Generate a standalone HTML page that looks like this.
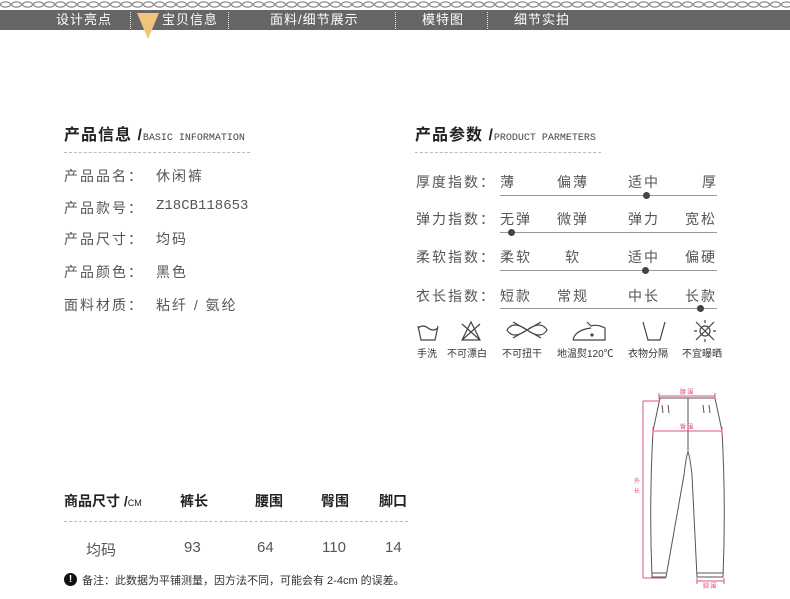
<!DOCTYPE html>
<html><head><meta charset="utf-8"><style>
*{margin:0;padding:0;box-sizing:border-box}
body{width:790px;height:599px;background:#fff;position:relative;overflow:hidden;font-family:"Liberation Sans","Noto Sans CJK SC",sans-serif;color:#555}
.a{position:absolute;white-space:nowrap}
.nav{position:absolute;left:0;top:10px;width:790px;height:20px;background:#666}
.nt{position:absolute;top:11px;color:#fff;font-size:13px;line-height:18px;letter-spacing:1px}
.sep{position:absolute;top:12px;height:17px;border-left:1px dotted #eee}
.t{font-size:16px;color:#222;letter-spacing:1px;font-weight:bold}
.t span{font-family:"Liberation Mono",monospace;font-size:10px;color:#444;letter-spacing:0;font-weight:normal}
.dl{position:absolute;height:1px;border-top:1px dashed #bbb}
.r{font-size:14px;letter-spacing:2px;color:#555}
.ln{position:absolute;height:1px;background:#999;left:500px;width:217px}
.dot{position:absolute;width:7px;height:7px;border-radius:50%;background:#444}
.ic{font-size:10px;color:#333;top:345px}
.h{font-size:14px;color:#222;font-weight:bold}
</style></head><body>
<svg class="a" style="left:0;top:0" width="790" height="9"><defs><pattern id="p" width="11" height="9" patternUnits="userSpaceOnUse"><ellipse cx="5.5" cy="4.5" rx="5" ry="2.6" fill="none" stroke="#888" stroke-width="1.2"/></pattern></defs><rect width="790" height="9" fill="url(#p)"/></svg>
<div class="nav"></div>
<div class="nt" style="left:56px">设计亮点</div>
<div class="nt" style="left:162px">宝贝信息</div>
<div class="nt" style="left:270px">面料/细节展示</div>
<div class="nt" style="left:422px">模特图</div>
<div class="nt" style="left:514px">细节实拍</div>
<div class="sep" style="left:130px"></div><div class="sep" style="left:228px"></div><div class="sep" style="left:395px"></div><div class="sep" style="left:487px"></div>
<svg class="a" style="left:136px;top:12px" width="24" height="28"><polygon points="1,1 23,1 12,27" fill="#f2c37a"/></svg>

<div class="a t" style="left:64px;top:121px">产品信息 /<span>BASIC INFORMATION</span></div>
<div class="dl" style="left:64px;top:152px;width:186px"></div>
<div class="a r" style="left:64px;top:166px">产品品名：</div><div class="a r" style="left:156px;top:166px">休闲裤</div>
<div class="a r" style="left:64px;top:198px">产品款号：</div><div class="a r" style="left:156px;top:198px;font-family:'Liberation Mono',monospace;letter-spacing:0">Z18CB118653</div>
<div class="a r" style="left:64px;top:229px">产品尺寸：</div><div class="a r" style="left:156px;top:229px">均码</div>
<div class="a r" style="left:64px;top:262px">产品颜色：</div><div class="a r" style="left:156px;top:262px">黑色</div>
<div class="a r" style="left:64px;top:295px">面料材质：</div><div class="a r" style="left:156px;top:295px">粘纤 / 氨纶</div>

<div class="a t" style="left:415px;top:121px">产品参数 /<span>PRODUCT PARMETERS</span></div>
<div class="dl" style="left:415px;top:152px;width:186px"></div>

<div class="a r" style="left:416px;top:172px">厚度指数：</div>
<div class="a r" style="left:500px;top:172px">薄</div><div class="a r" style="left:557px;top:172px">偏薄</div><div class="a r" style="left:628px;top:172px">适中</div><div class="a r" style="left:702px;top:172px">厚</div>
<div class="ln" style="top:195px"></div><div class="dot" style="left:643px;top:192px"></div>

<div class="a r" style="left:416px;top:209px">弹力指数：</div>
<div class="a r" style="left:500px;top:209px">无弹</div><div class="a r" style="left:557px;top:209px">微弹</div><div class="a r" style="left:628px;top:209px">弹力</div><div class="a r" style="left:685px;top:209px">宽松</div>
<div class="ln" style="top:232px"></div><div class="dot" style="left:508px;top:229px"></div>

<div class="a r" style="left:416px;top:247px">柔软指数：</div>
<div class="a r" style="left:500px;top:247px">柔软</div><div class="a r" style="left:565px;top:247px">软</div><div class="a r" style="left:628px;top:247px">适中</div><div class="a r" style="left:685px;top:247px">偏硬</div>
<div class="ln" style="top:270px"></div><div class="dot" style="left:642px;top:267px"></div>

<div class="a r" style="left:416px;top:286px">衣长指数：</div>
<div class="a r" style="left:500px;top:286px">短款</div><div class="a r" style="left:557px;top:286px">常规</div><div class="a r" style="left:628px;top:286px">中长</div><div class="a r" style="left:685px;top:286px">长款</div>
<div class="ln" style="top:308px"></div><div class="dot" style="left:697px;top:305px"></div>

<svg class="a" style="left:415px;top:318px" width="320" height="26" fill="none" stroke="#444" stroke-width="1.2">
<path d="M3,8 L6,22 H20 L23,8 M3,10 Q8,6 13,10 Q18,14 23,10"/>
<path d="M47,22 L56,4 L65,22 Z M47,6 L65,22 M65,6 L47,22"/>
<path d="M92,12 Q98,2 112,12 Q126,22 132,12 Q126,2 112,12 Q98,22 92,12 Z M98,4 L126,20 M126,4 L98,20"/>
<path d="M158,22 H190 V10 Q182,6 176,8 L172,4 M158,22 Q160,12 176,10"/><circle cx="177" cy="17" r="1" fill="#444"/>
<path d="M228,4 L233,22 H245 L250,4"/>
<circle cx="290" cy="13" r="5"/><path d="M281,4 L299,22 M299,4 L281,22 M290,2 V5 M290,21 V24 M279,13 H282 M298,13 H301"/>
</svg>
<div class="a ic" style="left:417px">手洗</div>
<div class="a ic" style="left:447px">不可漂白</div>
<div class="a ic" style="left:502px">不可扭干</div>
<div class="a ic" style="left:557px">地温熨120℃</div>
<div class="a ic" style="left:628px">衣物分隔</div>
<div class="a ic" style="left:682px">不宜曝晒</div>

<svg class="a" style="left:630px;top:385px" width="110" height="205" fill="none">
<g stroke="#555" stroke-width="1">
<path d="M30,13 H85 L92,46 Q96,120 93,192 H67 L62,90 Q60,72 58,67 Q56,72 54,90 L36,192 H22 Q19,120 23,46 Z"/>
<path d="M58,13 V67 M32,20 L33,28 M38,20 L39,28 M73,20 L74,28 M79,20 L80,28 M22,188 H36 M67,188 H93"/>
</g>
<g stroke="#e0507a" stroke-width="1">
<path d="M29,11 H85 M29,8 V14 M85,8 V14"/>
<path d="M23,46 H92 M23,42 V50 M92,42 V50"/>
<path d="M13,16 V193 M13,16 H30 M13,193 H36"/>
<path d="M67,196 H94 M67,193 V199 M94,193 V199"/>
</g>
<g fill="#e0507a" font-size="6" font-family="Noto Sans CJK SC,sans-serif">
<text x="50" y="9">腰 围</text><text x="50" y="44">臀 围</text><text x="4" y="98">外</text><text x="4" y="108">长</text><text x="73" y="203">脚 围</text>
</g></svg>

<div class="a h" style="left:64px;top:491px">商品尺寸 /<span style="font-size:9px;font-weight:normal">CM</span></div>
<div class="a h" style="left:180px;top:491px">裤长</div>
<div class="a h" style="left:255px;top:491px">腰围</div>
<div class="a h" style="left:321px;top:491px">臀围</div>
<div class="a h" style="left:379px;top:491px">脚口</div>
<div class="dl" style="left:64px;top:521px;width:344px"></div>
<div class="a" style="left:86px;top:539px;font-size:15px">均码</div>
<div class="a" style="left:184px;top:539px;font-size:15px">93</div>
<div class="a" style="left:257px;top:539px;font-size:15px">64</div>
<div class="a" style="left:322px;top:539px;font-size:15px">110</div>
<div class="a" style="left:385px;top:539px;font-size:15px">14</div>
<div class="a" style="left:64px;top:573px;width:13px;height:13px;border-radius:50%;background:#111;color:#fff;font-size:10px;font-weight:bold;text-align:center;line-height:13px">!</div>
<div class="a" style="left:82px;top:572px;font-size:11px;color:#333">备注：此数据为平铺测量，因方法不同，可能会有 2-4cm 的误差。</div>
</body></html>
